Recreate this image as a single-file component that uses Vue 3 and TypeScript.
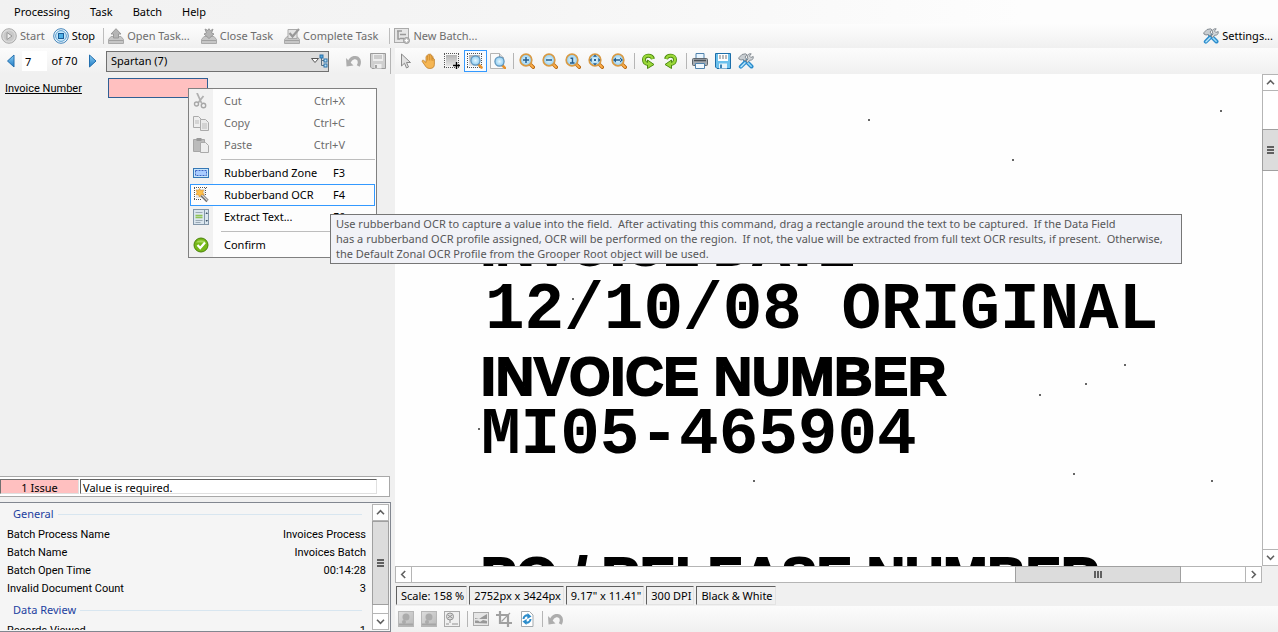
<script setup lang="ts">
import { ref } from 'vue'

interface Tool { icon: string; label: string; disabled?: boolean; active?: boolean }
interface MenuItem { icon: string; label: string; keys?: string; disabled?: boolean; active?: boolean }

const menus: string[] = ['Processing', 'Task', 'Batch', 'Help']

const taskTools: Tool[][] = [
  [
    { icon: 'start', label: 'Start', disabled: true },
    { icon: 'stop', label: 'Stop' },
  ],
  [
    { icon: 'open', label: 'Open Task...', disabled: true },
    { icon: 'close', label: 'Close Task', disabled: true },
    { icon: 'complete', label: 'Complete Task', disabled: true },
  ],
  [{ icon: 'batch', label: 'New Batch...', disabled: true }],
]

const viewTools: Tool[][] = [
  [
    { icon: 'pointer', label: 'Pointer' },
    { icon: 'hand', label: 'Pan' },
    { icon: 'select', label: 'Select region' },
    { icon: 'zoomregion', label: 'Zoom region', active: true },
    { icon: 'zoompage', label: 'Zoom page' },
  ],
  [
    { icon: 'zoomin', label: 'Zoom in' },
    { icon: 'zoomout', label: 'Zoom out' },
    { icon: 'zoomone', label: 'Actual size' },
    { icon: 'zoomfit', label: 'Fit page' },
    { icon: 'zoomwidth', label: 'Fit width' },
  ],
  [
    { icon: 'rotleft', label: 'Rotate left' },
    { icon: 'rotright', label: 'Rotate right' },
  ],
  [
    { icon: 'print', label: 'Print' },
    { icon: 'save', label: 'Save' },
    { icon: 'tools', label: 'Options' },
  ],
]

const imageTools: Tool[][] = [
  [
    { icon: 'person', label: 'Previous mark', disabled: true },
    { icon: 'person', label: 'Next mark', disabled: true },
    { icon: 'mark', label: 'Mark', disabled: true },
  ],
  [
    { icon: 'picture', label: 'Image', disabled: true },
    { icon: 'crop', label: 'Crop', disabled: true },
    { icon: 'refresh', label: 'Refresh' },
  ],
  [{ icon: 'undo', label: 'Revert', disabled: true }],
]

const contextGroups: MenuItem[][] = [
  [
    { icon: 'cut', label: 'Cut', keys: 'Ctrl+X', disabled: true },
    { icon: 'copy', label: 'Copy', keys: 'Ctrl+C', disabled: true },
    { icon: 'paste', label: 'Paste', keys: 'Ctrl+V', disabled: true },
  ],
  [
    { icon: 'zone', label: 'Rubberband Zone', keys: 'F3' },
    { icon: 'wand', label: 'Rubberband OCR', keys: 'F4', active: true },
    { icon: 'extract', label: 'Extract Text...', keys: 'F6' },
  ],
  [{ icon: 'confirm', label: 'Confirm' }],
]

const tooltipLines: string[] = [
  'Use rubberband OCR to capture a value into the field.  After activating this command, drag a rectangle around the text to be captured.  If the Data Field',
  'has a rubberband OCR profile assigned, OCR will be performed on the region.  If not, the value will be extracted from full text OCR results, if present.  Otherwise,',
  'the Default Zonal OCR Profile from the Grooper Root object will be used.',
]

const stats = [
  { title: 'General', rows: [
    ['Batch Process Name', 'Invoices Process'],
    ['Batch Name', 'Invoices Batch'],
    ['Batch Open Time', '00:14:28'],
    ['Invalid Document Count', '3'],
  ] },
  { title: 'Data Review', rows: [['Records Viewed', '1']] },
]

const docStatus: string[] = ['Scale: 158 %', '2752px x 3424px', '9.17" x 11.41"', '300 DPI', 'Black & White']

const specks: number[][] = [
  [474, 46], [618, 86], [826, 37], [730, 291], [691, 310], [645, 321],
  [679, 400], [359, 407], [817, 407], [178, 225], [84, 355],
]

const page = ref('7')
const doc = ref('Spartan (7)')
const invoice = ref('')
</script>

<template>
  <div class="app">
    <svg class="defs" aria-hidden="true">
      <defs>
        <linearGradient id="gGrey" x1="0" y1="0" x2="0" y2="1"><stop offset="0" stop-color="#b4b4b4" /><stop offset="1" stop-color="#e6e6e6" /></linearGradient>
        <linearGradient id="gPale" x1="0" y1="0" x2="1" y2="1"><stop offset="0" stop-color="#dedede" /><stop offset="1" stop-color="#b8b8b8" /></linearGradient>
        <linearGradient id="gBlue" x1="0" y1="0" x2="0" y2="1"><stop offset="0" stop-color="#8fd0f4" /><stop offset="1" stop-color="#1b78c4" /></linearGradient>
        <radialGradient id="gLens"><stop offset="0" stop-color="#e6f8ff" /><stop offset="1" stop-color="#8fcdf2" /></radialGradient>
      </defs>
      <symbol id="start" viewBox="0 0 16 16"><circle cx="8" cy="8" r="7.3" fill="#dcdcdc" stroke="#a9a9a9" /><circle cx="8" cy="8" r="5.6" fill="#c9c9c9" /><path d="M6 4.500v7l5-3.500z" fill="#ededed" stroke="#989898" /></symbol>
      <symbol id="stop" viewBox="0 0 16 16"><circle cx="8" cy="8" r="7.3" fill="#f4faff" stroke="#3f82b8" /><circle cx="8" cy="8" r="5.4" fill="#c4e6f9" stroke="#5c9fd0" /><rect x="5.500" y="5.500" width="5" height="5" fill="#4fb0e6" stroke="#1a5c97" /></symbol>
      <symbol id="tray" viewBox="0 0 16 16"><path d="M3 8.500h10l2.500 3v4H.5v-4z" fill="#c6c6c6" stroke="#aaa" /><path d="M1 12.500h14" stroke="#a0a0a0" /></symbol>
      <symbol id="open" viewBox="0 0 16 16"><use href="#tray" /><path d="M8 .7L13 6h-2.500v4h-5V6H3z" fill="#b5b5b5" stroke="#999" /></symbol>
      <symbol id="close" viewBox="0 0 16 16"><use href="#tray" /><path d="M8 10.500L3 6l2.500-1L4 1l3 1.500L8 .7l1.500 2L12 1l-1.500 4L13 6z" fill="#b5b5b5" stroke="#999" /></symbol>
      <symbol id="complete" viewBox="0 0 16 16"><use href="#tray" /><path d="M4 1.500h9v9H4z" fill="#e4e4e4" stroke="#aaa" /><path d="M5.500 5l3 3.500L15 1" fill="none" stroke="#999" stroke-width="2.200" /></symbol>
      <symbol id="batch" viewBox="0 0 16 16"><rect x=".5" y=".5" width="14" height="14" fill="#e6e6e6" stroke="#aaa" /><path d="M3 3h5M6 6.500h6M6 10.500h4M4 3v8h2" stroke="#999" stroke-width="1.500" fill="none" /><circle cx="12.500" cy="12.500" r="3" fill="#c8c8c8" stroke="#999" /><path d="M11 12.500h3M12.500 11v3" stroke="#fff" /></symbol>
      <symbol id="tools" viewBox="0 0 16 16"><path d="M7 7l6.500 6.500" stroke="#2c8ccc" stroke-width="4" stroke-linecap="round" /><path d="M8.500 8.500l4.700 4.800" stroke="#9bdcfb" stroke-width="1.500" stroke-linecap="round" /><path d="M7.500 9l-4.700 4.700" stroke="#2c8ccc" stroke-width="4" stroke-linecap="round" /><path d="M7 9.800l-4 3.900" stroke="#b6e6fc" stroke-width="1.500" stroke-linecap="round" /><path d="M.8 6L1 4.500 4 1.500 7.500.8l1.500 1L7 4l1.500 2L7 8 5 6.500 3 7z" fill="#c9ced2" stroke="#7d858b" stroke-width=".9" /><path d="M8 8l2-2-.7-2C9 2 11 .3 13.200.8L11.500 3l1.300 1.500 2.400-1c.5 2.500-1.200 4-3.500 3.700L9.500 9.500z" fill="#d3d7da" stroke="#7d858b" stroke-width=".9" /></symbol>
      <symbol id="prev" viewBox="0 0 10 14"><path d="M8 1v12L1.500 7z" fill="url(#gBlue)" stroke="#236fae" /></symbol>
      <symbol id="next" viewBox="0 0 10 14"><path d="M1.500 1v12L8 7z" fill="url(#gBlue)" stroke="#236fae" /></symbol>
      <symbol id="undo" viewBox="0 0 16 16"><path d="M3 9.500C5 4 11 3 13 7c.8 2 .3 4-.8 6" fill="none" stroke="#adadad" stroke-width="3.200" /><path d="M0 5l.5 8.500 7-1z" fill="#adadad" /></symbol>
      <symbol id="floppygrey" viewBox="0 0 16 16"><path d="M.5.5h15v15H2l-1.500-1.500z" fill="#d0d0d0" stroke="#9b9b9b" /><path d="M3 1h10v7H3zM4.500 11h7v4.500h-7z" fill="#eee" /><path d="M4 3h8M4 5h8" stroke="#aaa" /><path d="M6 12v3" stroke="#888" stroke-width="1.500" /></symbol>
      <symbol id="treedrop" viewBox="0 0 18 14"><path d="M1.500 4.500h7L5 8.500z" fill="#fff" stroke="#555" /><path d="M11.500 3v8.500h3M11.500 6.500h3" fill="none" stroke="#5a6f80" /><rect x="10" y="1" width="3" height="3" fill="#55a8da" stroke="#286fa8" /><rect x="14" y="5" width="3" height="3" fill="#b8e2f8" stroke="#286fa8" /><rect x="14" y="10" width="3" height="3" fill="#b8e2f8" stroke="#286fa8" /></symbol>
      <symbol id="pointer" viewBox="0 0 16 16"><path d="M3.500 1v12l3-2.800 2 4.800 2-1-2-4.500h4z" fill="#e2e2e2" stroke="#8a8a8a" /></symbol>
      <symbol id="hand" viewBox="0 0 16 16"><path d="M5 9.500V3.500q.8-1.500 1.600 0V2q.8-1.700 1.700 0v-.5q.9-1.500 1.800.3V3q.9-1.200 1.700.3V6q.8-1 1.600.2v5q0 4.300-4.500 4.300c-3 0-4-1.500-5.200-3.500L1.200 8.500c-.3-1.500 1-1.700 2-.7z" fill="#f5b654" stroke="#b8741c" stroke-width=".7" /><path d="M6.600 3.500v4M8.400 2v5.500M10.200 3v4.500M11.900 4v4" stroke="#c68224" stroke-width=".7" /></symbol>
      <symbol id="dotted" viewBox="0 0 16 16"><path d="M0 .5h16M0 14.500h16M.5 1v14M14.500 1v14" fill="none" stroke="#555" stroke-dasharray="1 1" /><rect x="2" y="2" width="11" height="11" fill="url(#gGrey)" /></symbol>
      <symbol id="select" viewBox="0 0 16 16"><use href="#dotted" /><path d="M9 12.500h7M12.500 9v7" stroke="#000" stroke-width="1.400" /></symbol>
      <symbol id="smalllens" viewBox="0 0 16 16"><path d="M11.500 11.500l3 3" stroke="#e8922c" stroke-width="2.600" stroke-linecap="round" /><circle cx="8.500" cy="7.500" r="4.600" fill="url(#gLens)" stroke="#5b92bb" stroke-width="1.200" /></symbol>
      <symbol id="zoomregion" viewBox="0 0 16 16"><use href="#dotted" /><use href="#smalllens" /></symbol>
      <symbol id="zoompage" viewBox="0 0 16 16"><path d="M.5.5h9l4 4v11H.5z" fill="#fafafa" stroke="#b4b4b4" /><path d="M9.500.5v4h4" fill="#ddd" stroke="#aaa" /><use href="#smalllens" x="1" y="1" /></symbol>
      <symbol id="lens" viewBox="0 0 16 16"><path d="M10.500 10.500l3.800 3.800" stroke="#b86710" stroke-width="3.400" stroke-linecap="round" /><path d="M10.500 10.500l3.600 3.600" stroke="#ffb04a" stroke-width="1.800" stroke-linecap="round" /><circle cx="7" cy="7" r="5.800" fill="url(#gLens)" stroke="#d99a44" stroke-width="1.700" /></symbol>
      <symbol id="zoomin" viewBox="0 0 16 16"><use href="#lens" /><path d="M4 7h6M7 4v6" stroke="#245c8c" stroke-width="1.500" /></symbol>
      <symbol id="zoomout" viewBox="0 0 16 16"><use href="#lens" /><path d="M4 7h6" stroke="#245c8c" stroke-width="1.500" /></symbol>
      <symbol id="zoomone" viewBox="0 0 16 16"><use href="#lens" /><path d="M5.500 5.200h2V10M5 10h4.500" fill="none" stroke="#245c8c" stroke-width="1.500" /></symbol>
      <symbol id="zoomfit" viewBox="0 0 16 16"><use href="#lens" /><path d="M7 1.500l2 2.200H5zM7 12.500l2-2.200H5zM1.500 7l2.200 2V5zM12.500 7l-2.200 2V5zM6 6h2v2H6z" fill="#245c8c" /></symbol>
      <symbol id="zoomwidth" viewBox="0 0 16 16"><use href="#lens" /><path d="M2 7l3-2.500V9.500zM12 7L9 4.500V9.500zM4 6.300h6v1.400H4z" fill="#245c8c" /></symbol>
      <symbol id="rotright" viewBox="0 0 16 16"><path d="M3 6C4 1.500 12 1.500 12 6.500c0 3-2 4.500-5 4.500" fill="none" stroke="#4d8a10" stroke-width="4" /><path d="M8.500 7v8.500l-6.500-4z" fill="#9bd83a" stroke="#4d8a10" /><path d="M3.300 5.700C4.500 1.500 12 1.500 12 6.500c0 3-2 4.500-5 4.500" fill="none" stroke="#9bd83a" stroke-width="2.200" /></symbol>
      <symbol id="rotleft" viewBox="0 0 16 16"><g transform="matrix(-1 0 0 1 16 0)"><use href="#rotright" /></g></symbol>
      <symbol id="print" viewBox="0 0 16 16"><path d="M4 .5h8V6H4z" fill="#e8f5ff" stroke="#5183ad" /><rect x=".5" y="5.500" width="15" height="7" rx="1" fill="#a5abb1" stroke="#5f666d" /><path d="M2 7.500h12" stroke="#4b5258" stroke-width="1.500" /><path d="M3.500 10.500h9v5h-9z" fill="#f3faff" stroke="#5183ad" /></symbol>
      <symbol id="save" viewBox="0 0 16 16"><path d="M.5.5h15v15H2l-1.500-1.500z" fill="#6cc0ec" stroke="#1d6ea9" /><path d="M3 1h10v7H3z" fill="#fff" /><path d="M4 3h8M4 5h8" stroke="#777" stroke-dasharray="2 1" /><path d="M4 10.500h8v5H4z" fill="#e9f4fb" /><path d="M6 11.500v3.500" stroke="#1d6ea9" stroke-width="1.700" /></symbol>
      <symbol id="person" viewBox="0 0 16 16"><rect x=".5" y=".5" width="15" height="15" fill="url(#gPale)" stroke="#b7b7b7" /><circle cx="8" cy="6" r="3.500" fill="#ababab" /><circle cx="6" cy="11" r="2" fill="#ababab" /><path d="M1 13.500h14" stroke="#a6a6a6" stroke-width="2" /></symbol>
      <symbol id="mark" viewBox="0 0 16 16"><rect x=".5" y=".5" width="15" height="15" fill="#f0f0f0" stroke="#aaa" /><circle cx="6" cy="5.500" r="3.500" fill="#ddd" stroke="#929292" /><path d="M4 4l4 3M4 7l4-3M6 9v3M2 13h3M8 13h6" stroke="#929292" /></symbol>
      <symbol id="picture" viewBox="0 0 16 16"><rect x=".5" y="1.500" width="15" height="13" fill="#e6e6e6" stroke="#aaa" /><path d="M2 7l4 1 3-2 5-3v5H2zM2 12V9.500h3l2 1.500 3-2 4 1v2.500z" fill="#999" /></symbol>
      <symbol id="crop" viewBox="0 0 16 16"><path d="M4 0v12h12M0 4h12v12" fill="none" stroke="#a0a0a0" stroke-width="2.200" /><path d="M5.500 10.500L14 2" stroke="#a0a0a0" stroke-width="1.200" /></symbol>
      <symbol id="refresh" viewBox="0 0 16 16"><path d="M2.500.5h8l3.500 3.500v11.500h-11.500z" fill="#fff" stroke="#a3a9ae" /><path d="M4.500 8c0-3 3-4.500 5-3M11.500 8c0 3-3 4.500-5 3" fill="none" stroke="#2b8ccb" stroke-width="2" /><path d="M8.500 2l4 3.500-4.200 2.500zM7.500 14l-4-3.500 4.200-2.500z" fill="#2b8ccb" /></symbol>
      <symbol id="cut" viewBox="0 0 16 16"><path d="M4 0l4.500 10M10.500 3L5 10" stroke="#b0b0b0" stroke-width="1.800" /><circle cx="3.500" cy="11" r="2" fill="none" stroke="#a6a6a6" stroke-width="1.400" /><circle cx="10.500" cy="12.500" r="2.200" fill="none" stroke="#a6a6a6" stroke-width="1.400" /></symbol>
      <symbol id="copy" viewBox="0 0 16 16"><path d="M.5 1.500h5l3 3v8h-8z" fill="#eee" stroke="#aaa" /><path d="M7.500 4.500h5l3 3v8h-8z" fill="#eaeaea" stroke="#aaa" /><path d="M2 6h4M2 8h4M9 9h5M9 11h5M9 13h5" stroke="#bbb" /></symbol>
      <symbol id="paste" viewBox="0 0 16 16"><path d="M.5 2.500h11v12h-11z" fill="#bbb" stroke="#a6a6a6" /><path d="M3.500 1h5v3h-5z" fill="#999" /><path d="M7.500 5.500h5l3 3v7h-8z" fill="#eee" stroke="#aaa" /></symbol>
      <symbol id="zone" viewBox="0 0 16 16"><rect x=".5" y="3.500" width="15" height="9" fill="#c9e6fb" stroke="#3577b5" /><rect x="2.500" y="5.500" width="11" height="5" fill="#a9ccff" stroke="#3d64c4" stroke-dasharray="2 1" /></symbol>
      <symbol id="wand" viewBox="0 0 16 16"><path d="M1 .5h13M1 12.500h8M1.500 1v12M12.500 1v8" stroke="#555" stroke-dasharray="1 1" fill="none" /><rect x="3" y="2" width="9" height="9" fill="#e4e4e4" /><path d="M8.500 8l6 6" stroke="#6b6b6b" stroke-width="3.200" /><path d="M8.500 7.500l6 6" stroke="#d6d6d6" stroke-width="1.300" /><path d="M6.500 1.500l1.200 2.200L10.500 3l-.8 2.500L11 8l-2.800-.5L6.500 10 5.500 7.500 3 7.500l1.200-2L3 3l2.500.7z" fill="#ffc04a" stroke="#e39a28" stroke-width=".7" /></symbol>
      <symbol id="extract" viewBox="0 0 16 16"><rect x=".5" y=".5" width="15" height="15" fill="#dbe6ee" stroke="#8296a8" /><path d="M11.500 1v14" stroke="#8296a8" /><path d="M2.500 3.500h7M2.500 11.500h7M2.500 13.500h5" stroke="#9aa9b5" /><path d="M2.500 6.500h7M2.500 8.500h7" stroke="#8fc455" stroke-width="1.600" /><path d="M12.500 5l1.200-2L15 5zM12.500 11l1.200 2 1.300-2z" fill="#3f556a" /></symbol>
      <symbol id="confirm" viewBox="0 0 16 16"><circle cx="8" cy="8" r="7" fill="#76b818" stroke="#4a8309" /><path d="M3 5.500a5.500 4 0 0 1 10 0" fill="#a6d957" /><path d="M4.500 8l2.700 3 4.800-5.500" fill="none" stroke="#fff" stroke-width="2.200" /></symbol>
      <symbol id="chevron" viewBox="0 0 9 9"><path d="M1 6.200l3.500-3.500L8 6.200" fill="none" stroke="#606060" stroke-width="1.600" /></symbol>
    </svg>

    <nav class="menubar" aria-label="Main menu">
      <button v-for="m in menus" :key="m" type="button">{{ m }}</button>
    </nav>

    <div class="taskbar">
      <div v-for="(group, g) in taskTools" :key="g" class="taskgroup">
        <button v-for="t in group" :key="t.label" type="button" :disabled="t.disabled">
          <svg class="ico"><use :href="'#' + t.icon" /></svg>{{ t.label }}
        </button>
      </div>
      <button type="button" class="settings"><svg class="ico"><use href="#tools" /></svg>Settings...</button>
    </div>

    <main class="work">
      <section class="side" aria-label="Data panel">
        <div class="docbar">
          <button type="button" class="step" aria-label="Previous document"><svg><use href="#prev" /></svg></button>
          <input v-model="page" class="pageno" aria-label="Document number">
          <span class="total">of 70</span>
          <button type="button" class="step" aria-label="Next document"><svg><use href="#next" /></svg></button>
          <div class="picker">
            <select v-model="doc" aria-label="Document type"><option>Spartan (7)</option></select>
            <svg class="drop"><use href="#treedrop" /></svg>
          </div>
          <div class="docactions">
            <button type="button" disabled aria-label="Undo"><svg class="ico"><use href="#undo" /></svg></button>
            <button type="button" disabled aria-label="Save data"><svg class="ico"><use href="#floppygrey" /></svg></button>
          </div>
        </div>

        <div class="fields">
          <label for="invoice">Invoice Number</label>
          <input id="invoice" v-model="invoice">
        </div>

        <div class="issues">
          <div class="count">1 Issue</div>
          <div class="message">Value is required.</div>
        </div>

        <div class="stats">
          <div class="statlist">
            <section v-for="s in stats" :key="s.title">
              <h2>{{ s.title }}</h2>
              <dl>
                <div v-for="r in s.rows" :key="r[0]"><dt>{{ r[0] }}</dt><dd>{{ r[1] }}</dd></div>
              </dl>
            </section>
          </div>
          <div class="vbar">
            <button type="button" class="arrow" aria-label="Scroll up"><svg><use href="#chevron" /></svg></button>
            <div class="thumb stats-thumb"><i /><i /><i /></div>
            <button type="button" class="arrow last down" aria-label="Scroll down"><svg><use href="#chevron" /></svg></button>
          </div>
        </div>
      </section>

      <section class="viewer" aria-label="Document viewer">
        <div class="iconbar">
          <div v-for="(group, g) in viewTools" :key="g" class="icongroup">
            <button v-for="t in group" :key="t.label" type="button" :aria-label="t.label" :class="{ active: t.active }">
              <svg class="ico"><use :href="'#' + t.icon" /></svg>
            </button>
          </div>
        </div>

        <div class="canvas">
          <div class="scan">
            <p class="print">INVOICE DATE</p>
            <p class="typed date">12/10/08 ORIGINAL</p>
            <p class="print number">INVOICE NUMBER</p>
            <p class="typed code">MI05-465904</p>
            <p class="print release">PO / RELEASE NUMBER</p>
            <svg class="specks" aria-hidden="true"><circle v-for="(s, i) in specks" :key="i" :cx="s[0]" :cy="s[1]" r="1" /></svg>
          </div>
          <div class="vbar">
            <button type="button" class="arrow" aria-label="Scroll up"><svg><use href="#chevron" /></svg></button>
            <div class="thumb page-thumb"><i /><i /><i /></div>
            <button type="button" class="arrow last down" aria-label="Scroll down"><svg><use href="#chevron" /></svg></button>
          </div>
          <div class="hbar">
            <button type="button" class="arrow left" aria-label="Scroll left"><svg><use href="#chevron" /></svg></button>
            <div class="track"><div class="thumb"><i /><i /><i /></div></div>
            <button type="button" class="arrow right" aria-label="Scroll right"><svg><use href="#chevron" /></svg></button>
          </div>
        </div>

        <div class="docstatus"><span v-for="s in docStatus" :key="s">{{ s }}</span></div>

        <div class="iconbar imagebar">
          <div v-for="(group, g) in imageTools" :key="g" class="icongroup">
            <button v-for="t in group" :key="t.label" type="button" :aria-label="t.label" :disabled="t.disabled">
              <svg class="ico"><use :href="'#' + t.icon" /></svg>
            </button>
          </div>
        </div>
      </section>
    </main>

    <div class="context" role="menu">
      <div v-for="(group, g) in contextGroups" :key="g" class="cgroup">
        <button v-for="c in group" :key="c.label" type="button" role="menuitem" :disabled="c.disabled" :class="{ active: c.active }">
          <svg class="ico"><use :href="'#' + c.icon" /></svg>
          <span class="clabel">{{ c.label }}</span>
          <span class="keys">{{ c.keys }}</span>
        </button>
      </div>
    </div>

    <div class="tooltip" role="tooltip">
      <div v-for="l in tooltipLines" :key="l">{{ l }}</div>
    </div>
  </div>
</template>

<style>
body { margin: 0; background: #f0f0f0; }
</style>

<style scoped>
.app { position: relative; display: flex; flex-direction: column; height: 100vh; overflow: hidden; background: #f0f0f0; color: #000; font: 11px/16px "Noto Sans", "Open Sans", sans-serif; }
.app * { box-sizing: border-box; }
button, input, select { margin: 0; padding: 0; border: 0; background: none; font: inherit; color: inherit; }
button:disabled { color: #6d6d6d; }
.defs { position: absolute; width: 0; height: 0; }
.ico { width: 16px; height: 16px; flex: none; display: block; overflow: visible; }

.menubar { flex: none; display: flex; height: 24px; padding-left: 8px; background: linear-gradient(90deg, #f1f1f1, #f5f5f5 40%, #fdfdfd 80%); }
.menubar button { padding: 0 6px; margin-right: 8px; }

.taskbar { flex: none; display: flex; align-items: center; height: 24px; background: linear-gradient(#fdfdfd, #f0f0f0); }
.taskgroup { display: flex; gap: 8px; padding: 0 8px 0 4px; border-left: 1px solid #bdbdbd; height: 16px; align-items: center; }
.taskgroup:first-child { border: 0; padding-left: 1px; }
.taskbar button { display: flex; align-items: center; gap: 3px; white-space: nowrap; }
.taskgroup + .taskgroup button { padding-right: 3px; }
.taskbar .settings { margin-left: auto; padding-right: 5px; }

.work { flex: 1; min-height: 0; display: flex; gap: 4px; }
.side { flex: none; width: 391px; display: flex; flex-direction: column; }
.docbar { flex: none; display: flex; align-items: center; height: 26px; background: linear-gradient(#fcfcfc, #f0f0f0); border-right: 1px solid #b5b5b5; }
.step { width: 22px; display: flex; justify-content: center; }
.step svg { width: 10px; height: 14px; }
.pageno { width: 25px; height: 20px; padding: 0 3px; background: #fff; }
.total { width: 35px; text-align: center; }
.picker { position: relative; width: 223px; margin-left: 2px; }
.picker select { display: block; appearance: none; width: 100%; height: 21px; padding: 0 4px; border: 1px solid #707070; border-radius: 0; background: #dcdcdc; }
.drop { position: absolute; right: 1px; top: 3px; width: 18px; height: 14px; pointer-events: none; }
.docactions { display: flex; gap: 8px; margin-left: auto; padding-right: 4px; }

.fields { flex: 1; display: grid; grid-template-columns: 103px 100px; align-content: start; align-items: center; padding: 4px 5px; font-family: Roboto, sans-serif; }
.fields label { padding-top: 2px; text-decoration: underline; }
.fields input { height: 20px; border: 1px solid #2f5f94; background: #ffc0c0; }

.issues { flex: none; display: flex; gap: 1px; width: 390px; height: 21px; padding: 2px 12px 2px 0; border: 1px solid #a8a8a8; border-left: 0; background: #fff; }
.count { width: 79px; text-align: center; background: #ffc0c0; border: 1px solid #e0e0e0; border-top-color: #707070; border-left-color: #707070; }
.message { flex: 1; padding-left: 2px; border: 1px solid #e0e0e0; border-top-color: #606060; border-left-color: #606060; }

.stats { flex: none; display: flex; height: 130px; margin-top: 5px; padding: 1px; border: 1px solid #828790; border-left: 0; background: #f5f5f5; }
.statlist { flex: 1; overflow: hidden; padding: 0 6px; font-family: Roboto, sans-serif; }
.statlist h2 { display: flex; align-items: center; gap: 4px; margin: 0; padding: 0 4px 2px 6px; height: 22px; font: 11px/18px "Noto Sans", sans-serif; color: #1c3fa0; }
.statlist h2::after { content: ""; flex: 1; height: 1px; background: #d8e6f0; }
.statlist section + section h2 { margin-top: 2px; }
.statlist dl { margin: 0; }
.statlist dl div { display: flex; justify-content: space-between; line-height: 18px; }
.statlist dd { margin: 0; }

.vbar { flex: none; display: flex; flex-direction: column; width: 17px; background: #fff; border: 1px solid #b5b5b5; }
.arrow { flex: none; display: flex; align-items: center; justify-content: center; width: 15px; height: 16px; border-bottom: 1px solid #b5b5b5; background: #fff; }
.arrow svg { width: 9px; height: 9px; }
.arrow.last { margin-top: auto; border-bottom: 0; border-top: 1px solid #b5b5b5; }
.down svg { transform: rotate(180deg); }
.left svg { transform: rotate(-90deg); }
.right svg { transform: rotate(90deg); }
.thumb { display: flex; flex-direction: column; align-items: center; justify-content: center; gap: 1px; background: #dcdcdc; border: 1px solid #a0a0a0; }
.thumb i { display: block; width: 7px; height: 2px; background: #606060; }
.vbar .thumb { margin: 0 -1px; }
.stats-thumb { height: 84px; }
.vbar .page-thumb { margin-top: 38px; height: 42px; }

.viewer { flex: 1; min-width: 0; display: flex; flex-direction: column; }
.iconbar { flex: none; display: flex; align-items: center; height: 26px; background: linear-gradient(#fcfcfc, #f0f0f0); }
.icongroup { display: flex; align-items: center; }
.icongroup + .icongroup::before { content: ""; width: 1px; height: 16px; margin: 0 2px 0 3px; background: #b5b5b5; }
.icongroup button { display: flex; align-items: center; width: 23px; height: 22px; padding: 0 3px 0 2px; border: 1px solid transparent; }
.icongroup button.active { border-color: #3399ff; background: #f7fbff; }

.canvas { flex: 1; min-height: 0; display: grid; grid-template-columns: minmax(0, 1fr) 16px; grid-template-rows: minmax(0, 1fr) 17px; }
.scan { position: relative; overflow: hidden; background: #fefefe; padding: 145px 0 0 86px; }
.scan p { margin: 0; line-height: 56px; height: 56px; white-space: pre; color: #000; }
.print { font-family: "Liberation Sans", Arial, sans-serif; font-size: 53px; font-weight: 700; -webkit-text-stroke: 2px #000; }
.typed { font-family: "Liberation Mono", "Courier New", monospace; font-size: 66px; font-weight: 700; }
.scan .date { margin-top: 8px; padding-left: 4px; }
.scan .number { margin-top: 10px; }
.scan .code { margin-top: 3px; }
.scan .release { margin-top: 85px; }
.specks { position: absolute; left: 0; top: 0; width: 100%; height: 100%; fill: #333; }
.hbar { display: flex; border: 1px solid #b5b5b5; background: #fff; }
.hbar .arrow { width: 16px; height: 15px; border: 0; }
.hbar .left { border-right: 1px solid #b5b5b5; }
.hbar .right { border-left: 1px solid #b5b5b5; }
.track { flex: 1; display: grid; grid-template-columns: 603fr 166fr 64fr; }
.track .thumb { grid-column: 2; flex-direction: row; margin: -1px 0; }
.track .thumb i { width: 2px; height: 7px; }

.docstatus { flex: none; display: flex; gap: 2px; padding: 3px 0 1px 1px; }
.docstatus span { padding: 0 2px 0 4px; line-height: 17px; border: 1px solid #e3e3e3; border-top-color: #606060; border-left-color: #606060; white-space: nowrap; }

.context { position: absolute; left: 188px; top: 88px; width: 189px; padding: 1px; border: 1px solid #808080; background: linear-gradient(90deg, #f1f1f1 24px, #fdfdfd 24px); }
.cgroup + .cgroup::before { content: ""; display: block; height: 1px; margin: 3px 0 2px 31px; background: #bdbdbd; }
.context button { display: flex; align-items: center; width: 100%; height: 22px; padding: 0 29px 0 2px; border: 1px solid transparent; text-align: left; white-space: nowrap; }
.context button.active { border-color: #3399ff; background: #fdfdfd; }
.clabel { flex: 1; margin-left: 15px; }

.tooltip { position: absolute; left: 330px; top: 214px; padding: 1px 18px 2px 5px; border: 1px solid #767676; background: #f1f2f7; color: #575757; line-height: 15px; white-space: pre; }
</style>
